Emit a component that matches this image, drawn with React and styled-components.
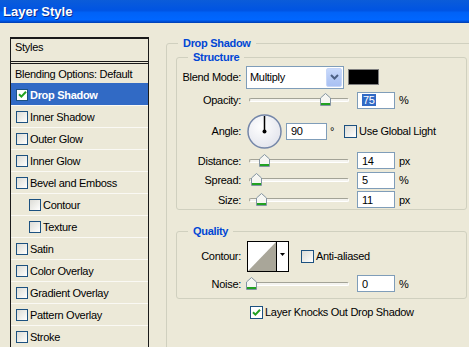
import React from "react";
import styled, { createGlobalStyle } from "styled-components";

const GlobalStyle = createGlobalStyle`
  html, body { margin: 0; padding: 0; background: #ECE9D8; }
  body {
    font-family: "Liberation Sans", Arial, sans-serif;
    font-size: 11px;
    color: #000;
  }
`;

const Page = styled.div`
  width: 469px;
  height: 347px;
  overflow: hidden;
  display: flex;
  flex-direction: column;
  background: #ECE9D8;
`;

const TitleBar = styled.div`
  height: 23px;
  flex-shrink: 0;
  display: flex;
  align-items: center;
  padding-left: 3px;
  background: linear-gradient(
    180deg,
    #0B5CD9 0%,
    #0054E3 45%,
    #0062F7 55%,
    #0066FF 86%,
    #0050D8 93%,
    #003CAE 100%
  );
  color: #fff;
  font-weight: bold;
  font-size: 13px;
  text-shadow: 1px 1px 0 #0A2A8C;
`;

const Body = styled.div`
  display: flex;
  flex: 1;
  min-height: 0;
  align-items: flex-start;
`;

const StylesPanel = styled.div`
  width: 139px;
  height: 330px;
  flex-shrink: 0;
  box-sizing: border-box;
  margin: 14px 0 0 10px;
  border: 1px solid #1a1a1a;
  border-top-width: 2px;
  letter-spacing: -0.3px;
`;

const PanelHeader = styled.div`
  height: 25px;
  box-sizing: border-box;
  padding: 1px 0 0 4px;
  line-height: 14px;
  border-bottom: 3px double #1a1a1a;
`;

const BlendingRow = styled.div`
  height: 19px;
  display: flex;
  align-items: center;
  padding-left: 4px;
`;

const StyleItem = styled.div`
  height: 22px;
  box-sizing: border-box;
  display: flex;
  align-items: center;
  gap: 2px;
  padding-left: ${(p) => (p.$indent ? 18 : 5)}px;
  border-top: 1px solid ${(p) => (p.$selected ? "#316AC5" : "#FAF9F4")};
  background: ${(p) => (p.$selected ? "#316AC5" : "transparent")};
  color: ${(p) => (p.$selected ? "#fff" : "#000")};
  font-weight: ${(p) => (p.$selected ? "bold" : "normal")};
  white-space: nowrap;
`;

const Box = styled.span`
  width: ${(p) => p.$size}px;
  height: ${(p) => p.$size}px;
  flex-shrink: 0;
  box-sizing: border-box;
  border: 1px solid #1C5180;
  background: ${(p) =>
    p.$checked
      ? "#fff"
      : "linear-gradient(135deg, #DCDCD7 0%, #EDEDE9 50%, #FFFFFF 100%)"};
  display: flex;
  align-items: center;
  justify-content: center;
`;

const Settings = styled.div`
  flex: 1;
  min-width: 0;
  overflow: hidden;
  margin: 13px 0 0 17px;
`;

const OuterGroup = styled.fieldset`
  width: 311px;
  height: 330px;
  box-sizing: border-box;
  margin: 0;
  padding: 0 9px;
  border: 1px solid #D0D0BF;
  border-radius: 3px;
  letter-spacing: -0.3px;
`;

const Legend = styled.legend`
  padding: 0 5px;
  margin-left: ${(p) => p.$inset}px;
  color: #0046D5;
  font-weight: bold;
  line-height: 14px;
  font-size: 11px;
`;

const InnerGroup = styled.fieldset`
  margin: ${(p) => p.$mt}px 0 0;
  padding: ${(p) => p.$pt}px 0 ${(p) => p.$pb}px;
  border: 1px solid #D0D0BF;
  border-radius: 3px;
  min-width: 0;
`;

const Row = styled.div`
  display: flex;
  align-items: center;
  height: ${(p) => p.$h}px;
  margin-top: ${(p) => p.$mt || 0}px;
  padding-left: ${(p) => p.$pl || 0}px;
`;

const Label = styled.span`
  width: 64px;
  flex-shrink: 0;
  text-align: right;
  white-space: nowrap;
`;

const Select = styled.div`
  margin-left: 5px;
  width: 98px;
  height: 23px;
  box-sizing: border-box;
  border: 1px solid #7F9DB9;
  background: #fff;
  display: flex;
  align-items: center;
  padding-left: 3px;
`;

const SelectButton = styled.span`
  margin: 1px 1px 1px auto;
  width: 16px;
  height: 19px;
  box-sizing: border-box;
  border: 1px solid #C6D6F8;
  border-radius: 2px;
  background: linear-gradient(180deg, #C9DAFC 0%, #B4C9F5 60%, #A9C1F3 100%);
  display: flex;
  align-items: center;
  justify-content: center;
`;

const Swatch = styled.span`
  margin-left: 4px;
  width: 31px;
  height: 16px;
  box-sizing: border-box;
  border: 1px solid #7F7F7F;
  background: #000;
`;

const SliderWrap = styled.div`
  position: relative;
  margin-left: 8px;
  width: 100px;
  height: 100%;
  display: flex;
  align-items: center;
`;

const Track = styled.div`
  width: 100%;
  height: 4px;
  box-sizing: border-box;
  border: 1px solid;
  border-color: #A3A397 #FFFFFF #FFFFFF #A3A397;
  border-radius: 2px;
  background: #F4F3EE;
`;

const Thumb = styled.svg`
  position: absolute;
  top: calc(50% - 7px);
`;

const Field = styled.span`
  margin-left: ${(p) => p.$ml}px;
  width: ${(p) => p.$w}px;
  height: 17px;
  box-sizing: border-box;
  border: 1px solid #7F9DB9;
  background: #fff;
  display: flex;
  align-items: center;
  padding-left: 4px;
`;

const Highlight = styled.span`
  background: #316AC5;
  color: #fff;
  padding: 0 1px;
  line-height: 12px;
`;

const Unit = styled.span`
  margin-left: ${(p) => p.$ml || 4}px;
`;

const Dial = styled.svg`
  margin-left: 6px;
  flex-shrink: 0;
`;

const CheckText = styled.span`
  margin-left: 2px;
  white-space: nowrap;
`;

const Spaced = styled.span`
  margin-left: ${(p) => p.$ml}px;
  display: flex;
`;

const ContourPicker = styled.svg`
  margin-left: 6px;
  flex-shrink: 0;
`;

function Checkbox({ checked, size = 13 }) {
  return (
    <Box $checked={checked} $size={size}>
      {checked && (
        <svg width="9" height="9" viewBox="0 0 9 9">
          <path d="M1 4.2 L3.4 6.6 L8 1.8" fill="none" stroke="#21A121" strokeWidth="2" />
        </svg>
      )}
    </Box>
  );
}

function Slider({ value }) {
  return (
    <SliderWrap>
      <Track />
      <Thumb width="11" height="13" viewBox="0 0 11 13" style={{ left: `${value - 4}px` }}>
        <path d="M0.5 5 L5.5 0.5 L10.5 5 V12.5 H0.5 Z" fill="#F6F6F2" stroke="#8394A2" />
        <rect x="1" y="10" width="9" height="2" fill="#21A121" />
      </Thumb>
    </SliderWrap>
  );
}

function SliderRow({ label, value, text, unit, h, selected }) {
  return (
    <Row $h={h}>
      <Label>{label}</Label>
      <Slider value={value} />
      <Field $ml={8} $w={38}>{selected ? <Highlight>{text}</Highlight> : text}</Field>
      <Unit>{unit}</Unit>
    </Row>
  );
}

const items = [
  { label: "Drop Shadow", checked: true, selected: true },
  { label: "Inner Shadow" },
  { label: "Outer Glow" },
  { label: "Inner Glow" },
  { label: "Bevel and Emboss" },
  { label: "Contour", indent: true },
  { label: "Texture", indent: true },
  { label: "Satin" },
  { label: "Color Overlay" },
  { label: "Gradient Overlay" },
  { label: "Pattern Overlay" },
  { label: "Stroke" },
];

export default function App() {
  return (
    <Page>
      <GlobalStyle />
      <TitleBar>Layer Style</TitleBar>
      <Body>
        <StylesPanel>
          <PanelHeader>Styles</PanelHeader>
          <BlendingRow>Blending Options: Default</BlendingRow>
          {items.map((it) => (
            <StyleItem key={it.label} $selected={it.selected} $indent={it.indent}>
              <Checkbox checked={it.checked} size={12} />
              <span>{it.label}</span>
            </StyleItem>
          ))}
        </StylesPanel>
        <Settings>
          <OuterGroup>
            <Legend $inset={2}>Drop Shadow</Legend>
            <InnerGroup $mt={0} $pt={1} $pb={0}>
              <Legend $inset={11}>Structure</Legend>
              <Row $h={24}>
                <Label>Blend Mode:</Label>
                <Select>
                  Multiply
                  <SelectButton>
                    <svg width="9" height="6" viewBox="0 0 9 6">
                      <path d="M1 1 L4.5 4.5 L8 1" fill="none" stroke="#4D6185" strokeWidth="2" />
                    </svg>
                  </SelectButton>
                </Select>
                <Swatch />
              </Row>
              <SliderRow h={22} label="Opacity:" value={75} text="75" unit="%" selected />
              <Row $h={40}>
                <Label>Angle:</Label>
                <Dial width="35" height="35" viewBox="0 0 35 35">
                  <defs>
                    <radialGradient id="dialFill" cx="0.4" cy="0.35" r="0.7">
                      <stop offset="0" stopColor="#FFFFFF" />
                      <stop offset="1" stopColor="#E2E4EC" />
                    </radialGradient>
                  </defs>
                  <circle cx="17.5" cy="17.5" r="16.5" fill="url(#dialFill)" stroke="#7486A8" strokeWidth="1.5" />
                  <line x1="17.5" y1="17.5" x2="17.5" y2="2" stroke="#000" strokeWidth="1.5" />
                  <circle cx="17.5" cy="17.5" r="2" fill="#000" />
                </Dial>
                <Field $ml={4} $w={41}>90</Field>
                <Unit $ml={3}>°</Unit>
                <Spaced $ml={10}>
                  <Checkbox />
                </Spaced>
                <CheckText>Use Global Light</CheckText>
              </Row>
              <SliderRow h={19} label="Distance:" value={14} text="14" unit="px" />
              <SliderRow h={20} label="Spread:" value={6} text="5" unit="%" />
              <SliderRow h={19} label="Size:" value={11} text="11" unit="px" />
            </InnerGroup>
            <InnerGroup $mt={14} $pt={2} $pb={3}>
              <Legend $inset={11}>Quality</Legend>
              <Row $h={32}>
                <Label>Contour:</Label>
                <ContourPicker width="42" height="31" viewBox="0 0 42 31">
                  <rect x="0.5" y="0.5" width="41" height="30" fill="#fff" stroke="#000" />
                  <polygon points="1,30 29,1 29,30" fill="#A9A699" />
                  <line x1="29.5" y1="0" x2="29.5" y2="31" stroke="#000" />
                  <polygon points="33,12 38,12 35.5,15" fill="#000" />
                </ContourPicker>
                <Spaced $ml={12}>
                  <Checkbox />
                </Spaced>
                <CheckText>Anti-aliased</CheckText>
              </Row>
              <SliderRow h={23} label="Noise:" value={1} text="0" unit="%" />
            </InnerGroup>
            <Row $h={18} $pl={74} $mt={4}>
              <Checkbox checked />
              <CheckText>Layer Knocks Out Drop Shadow</CheckText>
            </Row>
          </OuterGroup>
        </Settings>
      </Body>
    </Page>
  );
}
